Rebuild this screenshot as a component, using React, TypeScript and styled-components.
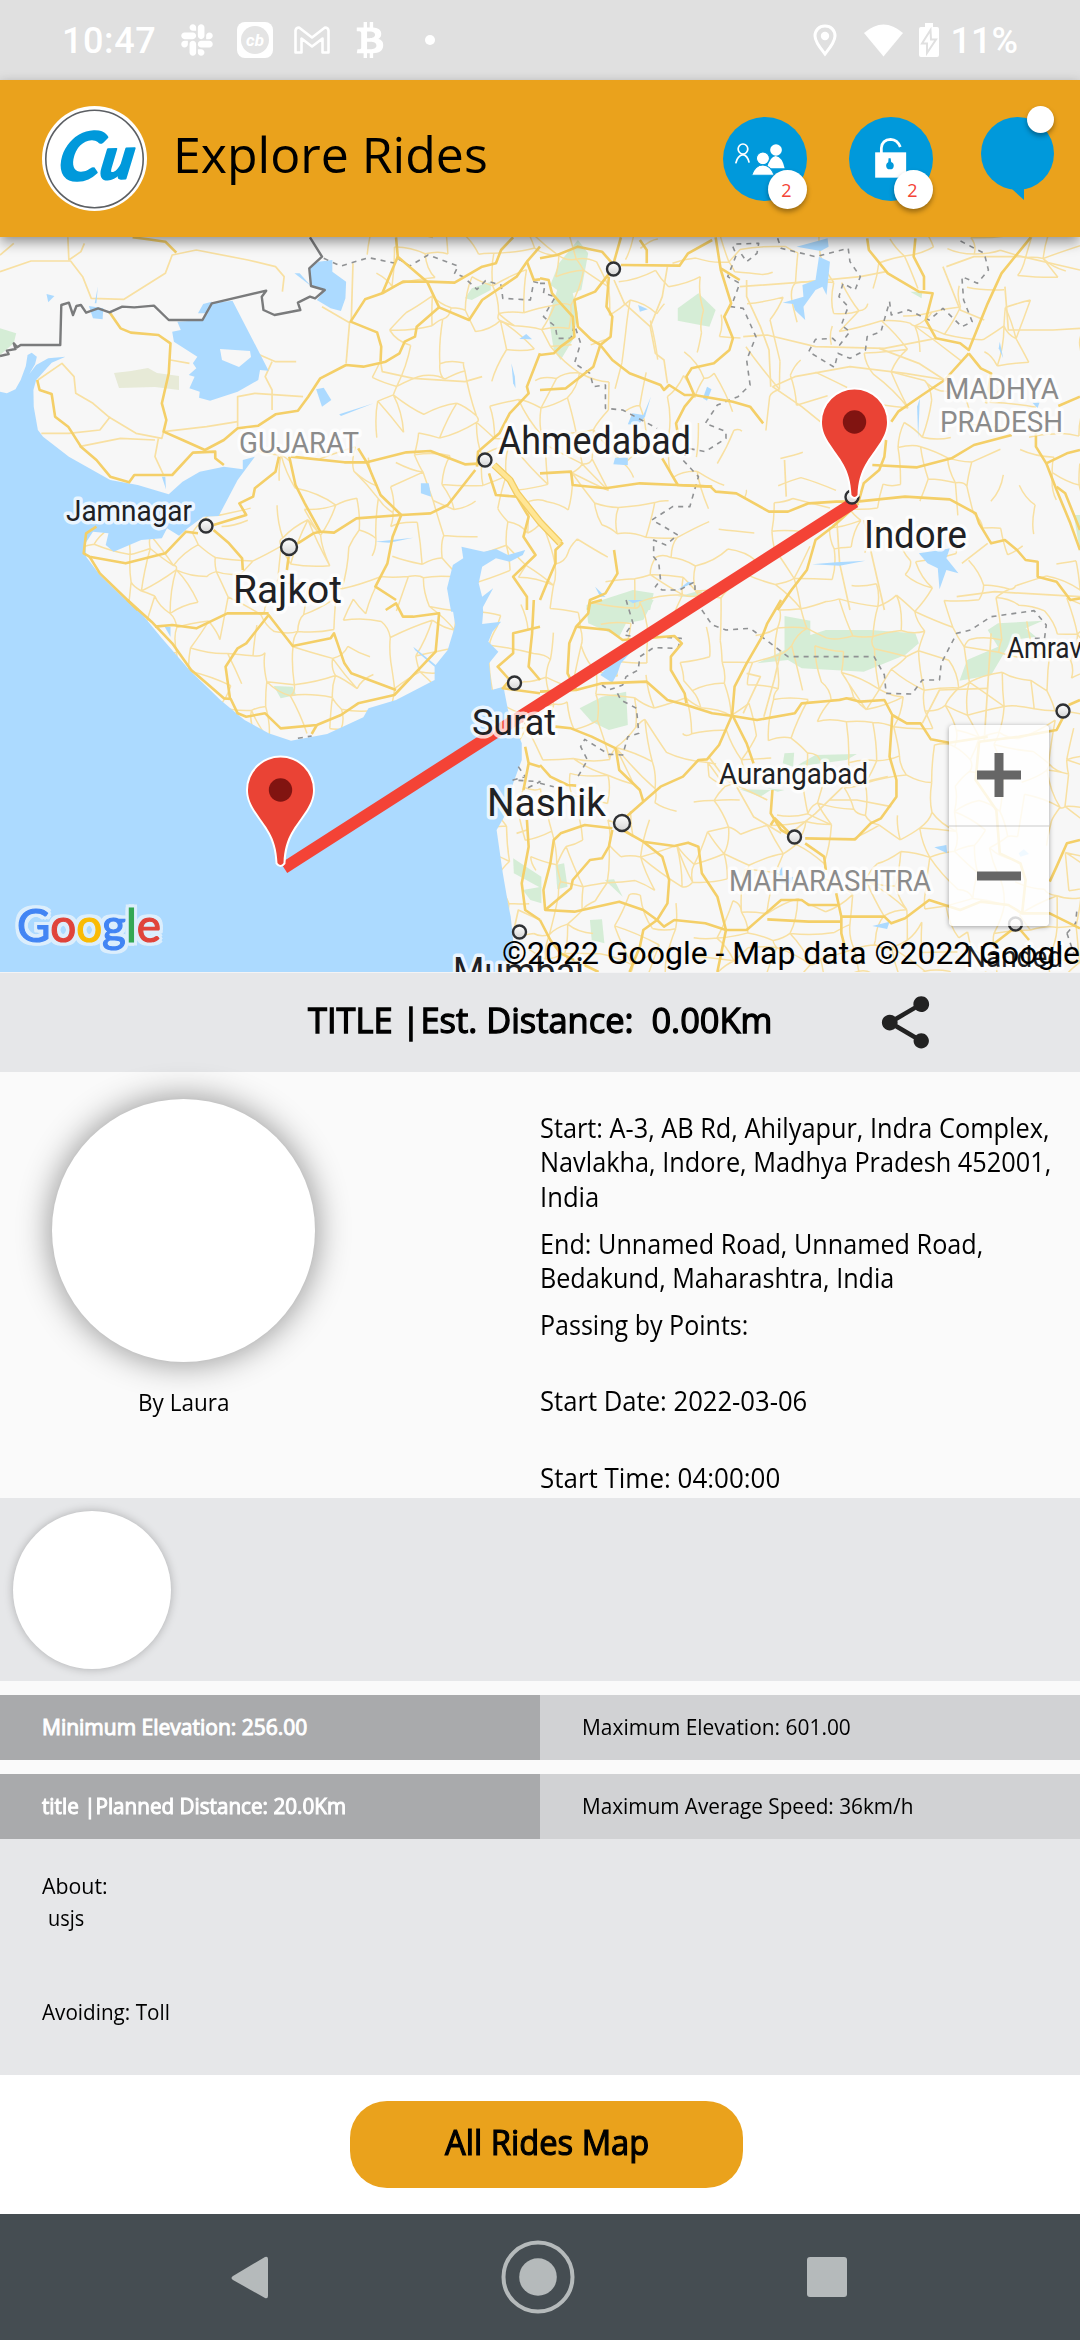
import React, { useLayoutEffect, useRef, useState } from 'react';
import styled, { createGlobalStyle } from 'styled-components';
import { FaSlack, FaBtc } from 'react-icons/fa';
import { MdShare } from 'react-icons/md';

const ORANGE = '#eaa21c';
const BLUE = '#0099db';
const PANEL = '#e6e7e9';

const Global = createGlobalStyle`
  * { box-sizing: border-box; }
  body { margin: 0; background: #fafafa; font-family: 'Open Sans', 'Noto Sans', sans-serif; color: #000; }
`;

const Screen = styled.main`
  width: 1080px;
  height: 2340px;
  display: flex;
  flex-direction: column;
  overflow: hidden;
  background: #fafafa;
`;

/* ---------- condensed text ---------- */

const FitBox = styled.span<{ $w: number; $size: number; $lh: number; $bold?: number }>`
  display: block;
  flex: none;
  width: ${p => p.$w}px;
  height: ${p => p.$lh}px;
  line-height: ${p => p.$lh}px;
  font-size: ${p => p.$size}px;
  white-space: pre;
  -webkit-text-stroke: ${p => p.$bold || 0}px currentColor;
`;
const FitInner = styled.span`
  display: inline-block;
  transform-origin: 0 50%;
`;

type FitProps = { w: number; size: number; lh: number; bold?: number; children: string };

function Fit({ w, size, lh, bold, children }: FitProps) {
  const ref = useRef<HTMLSpanElement>(null);
  const [scale, setScale] = useState(1);
  useLayoutEffect(() => {
    if (ref.current) setScale(w / ref.current.offsetWidth);
  }, [w, children]);
  return (
    <FitBox $w={w} $size={size} $lh={lh} $bold={bold}>
      <FitInner ref={ref} style={{ transform: `scaleX(${scale})` }}>{children}</FitInner>
    </FitBox>
  );
}

/* ---------- status bar ---------- */

const StatusBar = styled.div`
  flex: none;
  height: 80px;
  padding: 0 62px 0 62px;
  display: flex;
  align-items: center;
  justify-content: space-between;
  background: #e0e0e0;
  color: #fff;
  font: 500 36px Roboto, sans-serif;
`;
const StatusGroup = styled.div<{ $gap: number }>`
  display: flex;
  align-items: center;
  gap: ${p => p.$gap}px;
  svg { display: block; flex: none; }
`;
const Clock = styled.span`
  width: 95px;
  letter-spacing: 0.6px;
  line-height: 42px;
  padding-top: 2px;
`;
const Dot = styled.span`
  width: 10px;
  height: 10px;
  margin-left: 13px;
  border-radius: 50%;
  background: #fff;
`;
const Percent = styled.span`
  margin-left: -15px;
  line-height: 42px;
  padding-top: 2px;
`;

function Status() {
  return (
    <StatusBar>
      <StatusGroup $gap={24}>
        <Clock>10:47</Clock>
        <FaSlack size={36} style={{ marginLeft: -2 }} />
        <svg width="36" height="36" viewBox="0 0 36 36" style={{ marginLeft: -2 }}>
          <rect width="36" height="36" rx="8" fill="#fff" />
          <circle cx="18" cy="18" r="14" fill="#e4e4e4" />
          <text x="18" y="24" textAnchor="middle" fontFamily="Roboto, sans-serif" fontWeight="700" fontStyle="italic" fontSize="17" fill="#fff">cb</text>
        </svg>
        <svg width="36" height="28" viewBox="0 0 36 28" fill="none" stroke="#fff" strokeWidth="2.6" strokeLinejoin="round" style={{ marginLeft: -3 }}>
          <path d="M1.5 4.5 Q2 1.5 5 1.5 L18 11.5 L31 1.5 Q34 1.5 34.5 4.5 V26.5 H28.5 V12.5 L18 20.5 L7.5 12.5 V26.5 H1.5 Z" />
        </svg>
        <FaBtc size={36} style={{ marginLeft: -2 }} />
        <Dot />
      </StatusGroup>
      <StatusGroup $gap={27}>
        <svg width="24" height="33" viewBox="0 0 24 33">
          <path d="M12 2 C6 2 2 6.300 2 12 C2 18 8 25 12 30 C16 25 22 18 22 12 C22 6.300 18 2 12 2Z" fill="none" stroke="#fff" strokeWidth="3" />
          <circle cx="12" cy="12" r="4.200" fill="#fff" />
        </svg>
        <svg width="39" height="33" viewBox="0 0 39 33">
          <path d="M0 9 Q19.500 -8 39 9 L19.500 32.500Z" fill="#fff" />
        </svg>
        <svg width="20" height="34" viewBox="0 0 20 34" style={{ marginLeft: -11 }}>
          <path d="M6 0 H14 V4 H18 Q20 4 20 6 V32 Q20 34 18 34 H2 Q0 34 0 32 V6 Q0 4 2 4 H6Z" fill="#fff" />
          <path d="M11.500 7 L3 20.500 H8 V30 L17 16.500 H12Z" fill="#fff" stroke="#e0e0e0" strokeWidth="2" />
        </svg>
        <Percent>11%</Percent>
      </StatusGroup>
    </StatusBar>
  );
}

/* ---------- app header ---------- */

const Header = styled.header`
  flex: none;
  position: relative;
  z-index: 2;
  height: 157px;
  padding: 26px 26px 26px 42px;
  display: flex;
  align-items: flex-start;
  background: ${ORANGE};
  box-shadow: 0 5px 12px rgba(0, 0, 0, 0.42);
`;
const Title = styled.h1`
  margin: 6px 0 0 26px;
  font-weight: 400;
`;
const Actions = styled.div`
  margin-left: auto;
  margin-top: 11px;
  display: flex;
  align-items: flex-start;
`;
const Action = styled.div<{ $ml: number }>`
  position: relative;
  margin-left: ${p => p.$ml}px;
  svg { display: block; }
`;
const Badge = styled.span<{ $size: number; $top: number }>`
  position: absolute;
  right: 0;
  top: ${p => p.$top}px;
  width: ${p => p.$size}px;
  height: ${p => p.$size}px;
  border-radius: 50%;
  display: flex;
  align-items: center;
  justify-content: center;
  padding-right: 2px;
  background: #fff;
  color: #f44336;
  font-size: 18px;
  box-shadow: 0 3px 5px rgba(0, 0, 0, 0.35);
`;

function AppHeader() {
  return (
    <Header>
      <svg width="105" height="105" viewBox="0 0 105 105">
        <circle cx="52.500" cy="52.500" r="52.500" fill="#fff" />
        <circle cx="52.500" cy="53" r="48.700" fill="none" stroke="#5c5f63" strokeWidth="1.600" />
        <g transform="translate(14 75) rotate(-2) skewX(-12)" fill={BLUE} stroke={BLUE} strokeWidth="2" strokeLinejoin="round" fontFamily="Lato, sans-serif" fontWeight="900" fontStyle="italic">
          <text textLength="75" lengthAdjust="spacingAndGlyphs" fontSize="62">
            <tspan fontSize="66">C</tspan><tspan fontSize="58">u</tspan>
          </text>
        </g>
      </svg>
      <Title><Fit w={315} size={50} lh={84}>Explore Rides</Fit></Title>
      <Actions>
        <Action $ml={0}>
          <svg width="84" height="84" viewBox="531 350 244 252" preserveAspectRatio="none">
            <ellipse cx="653" cy="476" rx="122" ry="126" fill={BLUE} />
            <g fill="none" stroke="#fff" strokeWidth="5">
              <ellipse cx="589" cy="446" rx="14" ry="15" />
              <path d="M568 489 Q573 466 589 463 Q602 465 607 487" />
            </g>
            <g fill="#fff">
              <circle cx="685" cy="449" r="17" />
              <path d="M658 504 Q668 468 684 467 Q704 471 710 504Z" />
              <g stroke={BLUE} strokeWidth="3">
                <circle cx="647" cy="474" r="19" />
                <path d="M614 525 Q624 494 647 494 Q669 494 680 525Z" />
              </g>
            </g>
          </svg>
          <Badge $size={39} $top={53}>2</Badge>
        </Action>
        <Action $ml={42}>
          <svg width="84" height="84" viewBox="897 350 244 252" preserveAspectRatio="none">
            <ellipse cx="1019" cy="476" rx="122" ry="126" fill={BLUE} />
            <rect x="973" y="456" width="90" height="76" fill="#fff" />
            <path d="M991 458 V443 Q993 418 1018 417 Q1038 418 1046 440" fill="none" stroke="#fff" strokeWidth="8" />
            <circle cx="1016" cy="496" r="11" fill={BLUE} />
            <path d="M1012 474 H1018 L1021 496 H1010Z" fill={BLUE} />
          </svg>
          <Badge $size={39} $top={53}>2</Badge>
        </Action>
        <Action $ml={48}>
          <svg width="73" height="84" viewBox="0 0 73 84">
            <circle cx="36.500" cy="36.500" r="36.500" fill={BLUE} />
            <path d="M31 72 L43 83 V70Z" fill={BLUE} />
          </svg>
          <Badge $size={27} $top={-11} />
        </Action>
      </Actions>
    </Header>
  );
}

/* ---------- map ---------- */

const MapArea = styled.section`
  flex: none;
  position: relative;
  height: 735px;
  overflow: hidden;
  background: #f7f7f7;
  > svg { display: block; }
`;
const ZoomBox = styled.div`
  position: absolute;
  left: 949px;
  top: 488px;
  width: 100px;
  height: 201px;
  display: flex;
  flex-direction: column;
  background: rgba(255, 255, 255, 0.82);
  border-radius: 4px;
  box-shadow: 0 1px 5px rgba(0, 0, 0, 0.35);
`;
const ZoomButton = styled.button`
  flex: 1;
  display: flex;
  align-items: center;
  justify-content: center;
  padding: 0;
  border: 0;
  background: none;
  & + & { border-top: 2px solid rgba(0, 0, 0, 0.1); }
`;

type Sheet = {
  at: string;
  greens: string[];
  water: string[];
  major: string[];
  minor: string[];
  dashed: string[];
};

/* Each sheet is a quarter of the map in its own survey units. */
const sheets: Sheet[] = [
  {
    at: 'translate(0 230) scale(.34439 .33333)',
    greens: ['0 295 47 310 40 340 0 375', '1350 205 1370 175 1425 155 1425 180 1370 210'],
    water: [
      '0 485 20 490 45 478 60 450 75 408 80 375 92 368 107 380 102 402 85 432 105 405 140 385 190 380 150 398 105 450 97 480 98 530 110 600 125 620 200 680 320 750 400 765 490 793 530 755 580 725 650 710 705 718 705 690 740 680 690 750 635 858 590 860 545 895 520 917 485 895 470 925 410 930 330 965 307 945 315 910 270 905 248 940 250 980 290 1035 400 1145 0 1145',
      '1340 950 1405 965 1440 957 1475 975 1525 960 1518 975 1480 995 1440 985 1400 1010 1390 1060 1400 1100 1432 1075 1395 1145 1310 1145 1298 1075 1315 1005 1345 985',
      '515 275 590 270 615 220 675 212 780 422 755 420 750 450 690 485 610 512 578 503 580 485 550 475 565 440 548 435 570 415 560 400 573 380 505 335 500 305 525 300',
      '575 250 590 222 615 215 600 250', '898 115 925 95 965 90 965 125 1005 155 1003 205 990 243 960 235 920 210 943 180 900 168', '855 130 870 130 903 168',
      '135 192 158 198 140 217', '258 228 300 235 298 268 270 265', '275 220 284 170 280 220', '918 478 940 473 962 510 935 530', '985 553 1085 520 990 558',
      '1222 760 1245 760 1252 800 1222 790', '1090 935 1200 923 1130 938', '1508 327 1528 312 1545 328', '1485 400 1495 440 1497 475 1490 460', '470 740 480 740 482 778',
    ],
    major: [
      '385 22 430 28 480 35 512 68', '318 247 350 295 380 308 460 315 495 340 490 430 470 520 483 570 475 605 530 630 595 660 650 630 690 595 750 587 800 553 865 542 895 500 930 445 1005 405 1055 410 1120 395 1160 370 1175 335 1205 320 1210 290 1275 232 1240 155 1155 80 1150 22',
      '1240 155 1170 155 1110 190 1060 208 1018 275 1095 307 1107 350 1105 395', '1240 155 1320 158 1400 110 1440 100 1455 60 1490 22', '1275 232 1362 270 1400 210 1500 140 1530 95 1568 50', '1155 80 1110 190',
      '108 450 115 480 150 492 160 560 198 590 235 650 280 690 320 740 375 757 390 735 500 735 560 668 625 665 625 685 650 705', '845 680 1000 697 1065 697 1180 667 1250 663 1350 703 1400 700', '1040 655 1065 697 1105 795 1165 855 1140 920 1125 1000 1090 1070 1150 1110',
      '1165 855 1250 850 1300 825 1380 720', '840 680 858 765 885 820 930 905 970 908 1035 865 1165 855', '810 680 800 725 740 775 735 800 695 820 715 855 620 885', '575 910 540 905 480 970 365 1000 260 980 243 970 250 910 280 890',
      '620 900 665 940 703 985 705 1020', '260 980 290 1030 400 1140', '865 940 910 910 930 905', '838 980 833 1020', '1385 710 1388 665 1450 610 1480 550 1535 490 1530 470 1568 370', '1420 730 1440 795 1500 800 1535 860 1520 920 1555 975 1490 1040 1530 1100 1530 1140', '1530 95 1550 150 1568 148',
    ],
    minor: [
      '0 125 90 93 205 93 240 140 265 205 360 208 480 130 500 75 570 60 720 90 800 110 825 140 820 185', '197 22 200 90 235 65 245 40', '0 75 40 40', '110 450 180 400 215 440 220 490 270 520 315 560 395 610 470 625 475 605', '120 610 200 610 290 600 320 560', '230 650 350 625 450 630', '640 375 670 395 740 368 800 395 860 395', '495 390 550 400', '790 395 770 440 790 480 790 540', '690 590 690 500 740 490 880 500', '475 605 600 590 690 575', '460 625 450 680 475 735', '935 230 1015 278 1005 400', '1025 100 1020 270', '1105 395 1110 425 1200 445 1350 455 1400 440',
    ],
    dashed: ['940 85 990 108 1070 83 1150 100 1160 88 1190 108 1243 75 1330 108 1320 130 1345 140 1385 178 1410 152 1455 165 1460 205 1540 210 1550 155 1568 160'],
  },
  {
    at: 'translate(540 230) scale(.34439 .33333)',
    greens: ['55 100 110 30 140 70 120 180 95 190 110 250 95 330 60 390 40 360 25 260 50 180 30 165', '400 235 460 190 510 240 492 290 400 272', '1075 185 1110 185 1108 205', '1550 855 1568 855 1568 965', '135 1140 135 1125 270 1080 330 1090 320 1140', '400 1100 470 1080 470 1100'],
    water: ['810 80 842 95 832 195 820 170 800 180 765 230 770 270 740 240 735 222 705 218 765 200 762 165 800 150', '745 50 835 25 838 50 815 63', '285 225 313 238 290 245', '473 505 485 470 498 478 485 512', '255 583 268 550 300 555 322 500 305 560 285 585', '213 703 218 683 255 683 255 706', '1100 970 1165 960 1190 955 1180 985 1215 1030 1180 1020 1160 1078 1155 1015 1125 1000', '1095 530 1103 505 1098 625', '1335 335 1345 385 1332 355', '790 1003 860 997 945 992 870 1007', '160 1070 190 1100 175 1100', '400 1080 430 1055 445 1058', '1430 518 1450 518 1445 535'],
    major: [
      '0 85 50 75 110 50 180 65 210 100', '215 95 235 22', '235 105 405 107 430 70 500 30', '290 30 310 60 310 100', '510 22 525 120 555 220 535 260 560 325 550 360 505 400 440 415 425 440 448 495', '200 140 193 230 210 260 205 320 175 345 150 330 110 290 100 210 160 185 205 125',
      '0 145 25 150 35 190 60 220 95 260 100 320 60 350 40 370 0 375', '175 345 210 390 260 430 350 465 360 480 375 465 420 495 448 495 560 515 610 530 648 580', '175 345 155 410 75 475 0 480', '448 495 420 530 395 580 400 610', '355 685 400 765 495 770 510 785 570 790 665 845 720 845 780 820 860 815 920 815 1060 800 1190 808 1265 850 1275 880 1310 940 1350 930 1385 960 1410 990 1445 995 1445 1040 1500 1055 1540 1110 1568 1105',
      '0 730 90 725 95 765 190 775 290 760 400 765 500 770', '0 1110 20 1060 45 1000 45 960 65 940 50 925', '215 960 225 1030 190 1090 145 1110 140 1140', '950 25 955 60 1010 130 1100 185 1140 190 1120 270 1150 325 1220 340 1245 360 1300 220 1340 130 1425 22', '1090 25 1085 80 1115 140 1115 180',
      '1245 370 1175 450 1110 495 1040 545 1020 575', '1245 370 1280 415 1310 430 1295 520', '1005 630 1000 680 985 720 940 760 925 815', '965 705 1095 712 1195 685 1260 645 1370 615', '1440 610 1440 650 1470 700 1500 780 1540 880 1568 960', '1500 770 1525 790 1568 900', '1470 700 1530 670 1568 660', '1505 528 1568 500', '925 820 850 890 800 930 775 1020 730 1080 690 1140', '525 115 580 150',
    ],
    minor: ['580 170 780 155 930 140 1005 125', '215 150 245 220 320 290 335 370 360 390 370 460', '370 110 355 200 320 290', '670 470 665 360 640 290 600 200 600 150', '675 470 740 440 900 410 1060 430 1180 450', '590 320 660 315 800 350 1000 355 1150 325', '985 355 1100 400 1175 450', '675 470 760 530 820 580', '1180 110 1260 80 1400 80 1568 120', '1350 170 1360 300 1490 300 1568 295', '1170 110 1220 240 1290 270', '710 690 715 800', '860 840 870 1000 900 1140', '940 870 1000 1140', '1210 1100 1320 1085 1568 1100', '1225 1000 1300 940'],
    dashed: ['560 50 570 75 545 140 580 160 555 230 590 235 627 320 600 390 610 465 575 500 515 525 480 580 540 605 540 625 480 665 430 655 415 690 460 740 435 830 385 830 325 870 360 890 400 915 365 945 330 930 330 980 345 1000 350 1050 335 1070 355 1080 405 1080 450 1055 450 1080', '570 42 635 40 630 70 600 95 580 65', '690 25 700 55 800 80 895 55 900 95 930 140 915 180 880 160 868 200 895 230 875 285 900 305 870 345 850 325 800 328 780 365 855 412 865 370 900 385 945 360 950 320 990 305 1015 215 1020 255 1070 240 1130 270 1170 235 1225 290 1255 275 1230 210 1225 140 1270 160 1302 120 1290 70 1215 30', '0 160 15 160 10 190 45 200 10 260 45 290 50 325 90 325 100 285 118 340 100 400 145 430 155 470 190 465 190 535 240 540 340 595'],
  },
  {
    at: 'translate(0 600) scale(.34439 .33333)',
    greens: ['795 258 850 260 860 285 815 295', '1490 775 1572 830 1572 865 1492 820', '1518 870 1572 860 1572 910 1540 900'],
    water: ['0 0 370 0 410 40 470 115 550 210 640 300 710 360 780 400 845 422 950 402 1055 352 1070 325 1150 300 1262 240 1262 200 1205 150 1200 140 1265 195 1300 150 1322 75 1310 0 1400 0 1403 35 1400 72 1455 65 1430 95 1418 125 1447 155 1420 190 1428 270 1462 260 1475 330 1515 430 1515 480 1490 550 1470 640 1442 690 1460 820 1475 910 1483 950 1490 1020 1480 1120 0 1120', '478 80 495 80 495 110'],
    major: ['370 0 440 65 500 130 555 210 600 250 650 295 670 297 690 340 715 350 770 340 815 385 920 375 990 345 1040 310 1145 285 1265 155 1275 40 1200 50 1170 50 1150 10 1120 30', '668 297 655 200 690 145 715 130 780 45 850 138 960 115 970 100 1000 190 1020 220 1150 270', '780 40 660 40 570 85 500 75 450 80', '920 375 905 402', '1568 80 1490 100 1490 160 1445 200 1480 240 1460 265 1568 280', '1550 0 1545 100 1535 200 1568 240', '1525 440 1535 490 1520 570', '1530 660 1535 740 1515 850 1525 930 1568 960', '1535 490 1568 500'],
    minor: ['1490 1000 1505 930 1568 960', '1500 700 1530 690'],
    dashed: ['865 415 905 408', '1505 500 1525 530 1490 540 1568 545 1520 570'],
  },
  {
    at: 'translate(540 600) scale(.34439 .33333)',
    greens: ['135 25 240 0 330 0 300 60 250 70 230 110 140 70', '710 48 785 62 785 105 830 90 960 90 1090 100 1100 130 1060 165 940 215 760 205 720 180 630 190 710 150', '1300 90 1330 70 1460 62 1410 85 1440 110 1370 120 1310 225 1218 242 1240 180 1330 140', '115 325 180 290 250 275 255 375 200 390 150 365', '710 460 738 458 735 500 705 490', '740 500 800 465 920 462 890 480 780 495', '580 568 670 570 640 590', '45 795 70 790 80 860 50 868', '188 840 215 838 240 890', '145 960 180 958 187 1030 150 1020', '660 565 710 570 690 575'],
    water: ['175 225 210 185 265 155 235 190 225 220 210 248', '1145 742 1180 735 1182 760', '965 978 1015 965 1008 987', '695 815 703 800 705 840 735 830 735 850 700 850', '1390 760 1405 748 1420 762 1395 770', '255 0 300 0 270 10'],
    major: [
      '700 0 660 70 645 110 600 190 565 260 558 345 520 435 485 478 460 480 415 530 350 560 300 605 240 660', '105 80 85 130 80 220 105 270', '0 275 105 270 180 250 310 245 370 300 425 315 500 340 560 348 630 360 740 340 760 310 870 300 890 295 930 305 1000 300 1023 345 1065 370 1105 370 1135 418 1188 428 1300 410', '180 0 145 10 140 40 105 80 200 90 240 120 390 108 412 130 380 170 380 210 420 280 425 310',
      '560 348 600 430 620 490', '675 570 670 640 700 690 735 710', '670 675 682 655 735 710', '1023 345 1015 470 1035 540 1035 590 990 655 960 670 915 718 770 715', '45 380 90 385 150 410 220 445 230 510 290 570 300 605', '0 495 30 530 80 555 105 557', '240 690 300 725 390 738 430 728 460 740 470 820 515 890 540 990 515 1116', '300 725 355 770 375 840 370 910 340 960 300 990 290 1040 260 1116',
      '210 690 200 740 180 775 145 780 95 840 90 865 15 930', '210 685 130 675 60 700 40 720 30 790 10 870 15 930 100 935 230 905 300 930 340 960 360 980 390 960 480 970 540 990 600 990 700 900 760 900 780 915 865 915', '660 958 780 965 875 965', '770 730 825 770 830 810', '860 880 875 950 875 1000 885 1040', '875 950 1000 950 1020 970 1060 955 1130 900 1220 930 1280 905 1360 915 1400 940 1480 940 1568 985', '1520 350 1500 390 1390 410 1275 425', '1535 315 1568 300', '1480 845 1500 800 1530 730 1568 720', '1370 990 1320 1030', '1395 990 1420 1020', '0 960 30 1020 60 1060 170 1116', '1275 425 1265 540 1325 630 1335 760 1395 790 1410 840 1400 940',
    ],
    minor: ['650 350 680 240 700 150', '590 340 640 230 600 220', '490 470 540 540 660 600', '560 540 620 650 700 700', '740 690 800 640 880 560 1010 530', '1110 370 1160 270 1300 265', '1290 420 1310 100', '840 600 920 600 1020 620'],
    dashed: ['470 30 500 75 540 90 610 85 650 115 720 170 970 170 1000 225 1005 280 1080 282 1110 240 1160 240 1165 190 1210 100 1250 90 1310 50 1435 32 1470 75 1465 115 1430 115', '250 0 270 70 245 105 300 115', '340 110 410 115 400 145 330 143 290 170 285 210 250 230 240 255 200 270 180 255', '225 280 235 300 280 325 287 400 255 410 240 465 200 463 130 418 118 440 138 480 110 530', '1530 1000 1555 970 1560 920', '1530 1000 1550 1060', '0 550 40 560'],
  },
];

/* Fine web of country lanes, laid on a jittered lattice. */
const lanes = (() => {
  let seed = 11;
  const rnd = () => {
    seed = (seed * 1103515245 + 12345) % 2147483648;
    return seed / 2147483648;
  };
  const step = 25;
  const cols = 45;
  const rows = 32;
  const pts: number[][][] = [];
  for (let r = 0; r < rows; r++) {
    pts.push([]);
    for (let c = 0; c < cols; c++) pts[r].push([c * step + rnd() * 22 - 11, 230 + r * step + rnd() * 22 - 11]);
  }
  const sparse = (x: number, y: number) =>
    (x < 370 && y < 440) || (x < 250 && y < 500) || (x > 600 && y < 560 && rnd() < 0.45);
  let d = '';
  const link = (a: number[], b: number[]) => {
    if (sparse(a[0], a[1])) return;
    const mx = (a[0] + b[0]) / 2 + rnd() * 8 - 4;
    const my = (a[1] + b[1]) / 2 + rnd() * 8 - 4;
    d += `M${a[0].toFixed(1)} ${a[1].toFixed(1)}Q${mx.toFixed(1)} ${my.toFixed(1)} ${b[0].toFixed(1)} ${b[1].toFixed(1)}`;
  };
  for (let r = 0; r < rows - 1; r++) {
    for (let c = 0; c < cols - 1; c++) {
      if (rnd() < 0.62) link(pts[r][c], pts[r][c + 1]);
      if (rnd() < 0.62) link(pts[r][c], pts[r + 1][c]);
      if (rnd() < 0.12) link(pts[r][c], pts[r + 1][c + 1]);
    }
  }
  return d;
})();

const line = (p: string) => `M${p}`;
const area = (p: string) => `M${p}Z`;

const MapLine = styled.path<{ $c: string; $w: number; $dash?: string }>`
  fill: none;
  stroke: ${p => p.$c};
  stroke-width: ${p => p.$w}px;
  stroke-dasharray: ${p => p.$dash || 'none'};
  stroke-linejoin: round;
  vector-effect: non-scaling-stroke;
`;
const Label = styled.text<{ $size: number; $c?: string }>`
  font: 400 ${p => p.$size}px Roboto, sans-serif;
  fill: ${p => p.$c || '#202124'};
  stroke: rgba(255, 255, 255, 0.75);
  stroke-width: 7px;
  stroke-linejoin: round;
  paint-order: stroke;
`;
const Wordmark = styled.text`
  font: 400 47px Lato, sans-serif;
  stroke-width: 1.2px;
  filter: drop-shadow(3px 0 0 #dceefc) drop-shadow(-3px 0 0 #dceefc) drop-shadow(0 3px 0 #dceefc) drop-shadow(0 -3px 0 #dceefc);
`;

const GRAY = '#8b8b8b';
const labels: [string, number, number, number, number, string?][] = [
  ['GUJARAT', 239, 452.5, 120, 29.5, GRAY],
  ['MADHYA', 945, 399, 114, 29.5, GRAY],
  ['PRADESH', 940, 432, 123, 29.5, GRAY],
  ['MAHARASHTRA', 729, 890.5, 202, 29.5, GRAY],
  ['Ahmedabad', 498, 454, 193, 38],
  ['Jamnagar', 66, 521, 126, 29.5],
  ['Rajkot', 233, 603, 109, 38],
  ['Indore', 864, 548, 103, 38],
  ['Surat', 472, 735, 84, 37],
  ['Nashik', 487, 816, 119, 38],
  ['Amravati', 1007, 658, 104, 29.5],
  ['Aurangabad', 719, 784, 149, 29.5],
  ['Mumbai', 453, 984.5, 131, 38],
  ['Nanded', 966, 967, 97, 29.5],
];
const towns: [number, number, number][] = [
  [485, 460, 6.5], [206, 526, 6.5], [289, 547, 8], [613.5, 269, 6.5], [514.500, 683, 6.5],
  [622, 823, 8], [794.5, 837, 6.5], [1063, 711, 6.5], [519.5, 932, 6.5], [1015.5, 924, 6.5],
];

const Town = styled.circle`
  fill: url(#town);
  stroke: #2f3134;
  stroke-width: 2.4px;
`;

function Pin({ x, y }: { x: number; y: number }) {
  return (
    <g transform={`translate(${x} ${y})`}>
      <path
        d="M-3 73 C-4 46 -15 37 -26 20 C-31 12 -32.500 6 -32.500 0 A32.500 32.500 0 0 1 32.500 0 C32.500 6 31 12 26 20 C15 37 4 46 3 73 Q0 77 -3 73Z"
        fill="#ea4335" stroke="#fff" strokeWidth="4" paintOrder="stroke"
      />
      <circle r="11.700" fill="#811411" />
    </g>
  );
}

function RideMap() {
  return (
    <MapArea>
      <svg width="1080" height="735" viewBox="0 237 1080 735">
        <defs>
          <linearGradient id="town" x2="0" y2="1">
            <stop offset="0" stopColor="#fff" />
            <stop offset="1" stopColor="#d5d5d5" />
          </linearGradient>
        </defs>
        <rect y="237" width="1080" height="735" fill="#f7f7f7" />
        {sheets.map(s => (
          <g key={s.at} transform={s.at}>
            {s.greens.map(p => <path key={p} d={area(p)} fill="#d5edd6" />)}
          </g>
        ))}
        <path d="M114 373 L131 371 148 368 157 373 179 376 179 390 155 387 119 388Z" fill="#e7ead7" />
        <path d={lanes} fill="none" stroke="#f8e0a2" strokeWidth="1.500" />
        {sheets.map(s => (
          <g key={s.at} transform={s.at}>
            {s.minor.map(p => <MapLine key={p} d={line(p)} $c="#f8e0a2" $w={1.7} />)}
            {s.water.map(p => <path key={p} d={area(p)} fill="#acdaff" />)}
          </g>
        ))}
        <path d="M220 349 L250 351 251 357 239 367 222 360Z" fill="#f7f7f7" />
        {sheets.map(s => (
          <g key={s.at} transform={s.at}>
            {s.dashed.map(p => <MapLine key={p} d={line(p)} $c="#909294" $w={1.6} $dash="5 5" />)}
            {s.major.map(p => <MapLine key={p} d={line(p)} $c="#f4cf68" $w={2.6} />)}
          </g>
        ))}
        <g fill="none" strokeLinejoin="round">
          <path d="M494 465 L510 480 517 493 540 522 560 543" stroke="#f2cc62" strokeWidth="7" />
          <path d="M494 465 L510 480 517 493 540 522 560 543" stroke="#ffe695" strokeWidth="4.500" />
          <path
            transform="translate(0 230) scale(.34439 .33333)"
            vectorEffect="non-scaling-stroke"
            d="M0 378 25 372 20 362 45 357 40 340 50 352 60 345 175 345 178 225 200 218 212 255 222 228 235 225 250 248 285 235 318 247 355 230 390 232 447 227 490 270 588 270 615 220 773 182 760 200 765 240 797 255 872 240 865 218 900 200 915 205 943 180 903 168 898 115 935 80 900 22"
            stroke="#7a7b7c" strokeWidth="2.400"
          />
        </g>
        {towns.map(([x, y, r]) => <Town key={`${x}-${y}`} cx={x} cy={y} r={r} />)}
        <path d="M284 868 L855 502" stroke="#f44336" strokeWidth="12" />
        <Town cx={852} cy={497} r={6.5} />
        {labels.map(([t, x, y, w, size, c]) => (
          <Label key={t} x={x} y={y} textLength={w} lengthAdjust="spacingAndGlyphs" $size={size} $c={c}>{t}</Label>
        ))}
        <Pin x={854.5} y={422} />
        <Pin x={280.5} y={790} />
        <Wordmark x="17" y="941.5" textLength="144" lengthAdjust="spacingAndGlyphs">
          <tspan fill="#4285f4" stroke="#4285f4">G</tspan>
          <tspan fill="#e0433a" stroke="#e0433a">o</tspan>
          <tspan fill="#fabb05" stroke="#fabb05">o</tspan>
          <tspan fill="#4285f4" stroke="#4285f4">g</tspan>
          <tspan fill="#34a853" stroke="#34a853">l</tspan>
          <tspan fill="#e0433a" stroke="#e0433a">e</tspan>
        </Wordmark>
        <text x="502" y="963.500" textLength="578" lengthAdjust="spacingAndGlyphs" fontFamily="Roboto, sans-serif" fontSize="32" fill="#000">©2022 Google - Map data ©2022 Google</text>
      </svg>
      <ZoomBox>
        <ZoomButton><svg width="44" height="44"><path d="M0 22 H44 M22 0 V44" stroke="#666" strokeWidth="9" /></svg></ZoomButton>
        <ZoomButton><svg width="44" height="44"><path d="M0 22 H44" stroke="#666" strokeWidth="9" /></svg></ZoomButton>
      </ZoomBox>
    </MapArea>
  );
}

/* ---------- ride details ---------- */

const TitleBar = styled.div`
  flex: none;
  height: 100px;
  padding: 20px 0 0 308px;
  display: flex;
  align-items: flex-start;
  background: ${PANEL};
  border-top: 1px solid #f4f4f5;
  color: #000;
  svg { margin-left: 102px; margin-top: -2px; color: #222; }
`;
const Details = styled.section`
  flex: none;
  height: 426px;
  display: flex;
  background: #fafafa;
`;
const Host = styled.div`
  width: 540px;
  padding: 27px 0 0 52px;
`;
const HostInner = styled.div`
  width: 263px;
  display: flex;
  flex-direction: column;
  align-items: center;
  gap: 25px;
`;
const Avatar = styled.div<{ $size: number; $blur: number; $alpha: number }>`
  flex: none;
  width: ${p => p.$size}px;
  height: ${p => p.$size}px;
  border-radius: 50%;
  background: #fff;
  box-shadow: 0 0 ${p => p.$blur}px rgba(0, 0, 0, ${p => p.$alpha});
`;
const Info = styled.div`
  padding-top: 39px;
`;
const Para = styled.div<{ $mb: number }>`
  margin-bottom: ${p => p.$mb}px;
`;
const Riders = styled.div`
  flex: none;
  height: 183px;
  padding: 13px;
  background: ${PANEL};
`;
const StatRow = styled.div`
  flex: none;
  height: 65px;
  margin-top: 14px;
  display: grid;
  grid-template-columns: 1fr 1fr;
`;
const Stat = styled.div<{ $dark?: boolean }>`
  display: flex;
  align-items: center;
  padding-left: 42px;
  padding-bottom: 2px;
  background: ${p => (p.$dark ? '#a9aaac' : '#d1d2d4')};
  color: ${p => (p.$dark ? '#fff' : '#000')};
`;
const Notes = styled.div`
  flex: none;
  height: 236px;
  padding: 31px 42px 0;
  background: ${PANEL};
`;
const NoteGap = styled.div`
  height: 62px;
`;
const Indent = styled.div`
  padding-left: 6px;
`;
const Footer = styled.div`
  flex: none;
  height: 139px;
  padding: 26px 0 0 350px;
  background: #fff;
`;
const MapButton = styled.button`
  width: 393px;
  height: 87px;
  display: flex;
  justify-content: center;
  align-items: center;
  padding: 0 0 6px;
  border: 0;
  border-radius: 37px;
  background: ${ORANGE};
  color: #000;
  font-family: inherit;
`;
const NavBar = styled.nav`
  flex: 1;
  display: grid;
  grid-template-columns: 37px 1fr 40px;
  justify-items: center;
  align-items: center;
  padding: 0 233px 0 231px;
  background: #454d52;
  svg { display: block; }
`;

const info: { mb: number; lines: [string, number][] }[] = [
  { mb: 12.5, lines: [['Start: A-3, AB Rd, Ahilyapur, Indra Complex,', 509], ['Navlakha, Indore, Madhya Pradesh 452001,', 511], ['India', 59]] },
  { mb: 12.5, lines: [['End: Unnamed Road, Unnamed Road,', 443], ['Bedakund, Maharashtra, India', 354]] },
  { mb: 41.5, lines: [['Passing by Points:', 208]] },
  { mb: 42.5, lines: [['Start Date: 2022-03-06', 267]] },
  { mb: 0, lines: [['Start Time: 04:00:00', 240]] },
];

export default function App() {
  return (
    <Screen>
      <Global />
      <Status />
      <AppHeader />
      <RideMap />
      <TitleBar>
        <Fit w={464} size={35} lh={54} bold={1.3}>{'TITLE |Est. Distance:  0.00Km'}</Fit>
        <MdShare size={63} />
      </TitleBar>
      <Details>
        <Host>
          <HostInner>
            <Avatar $size={263} $blur={34} $alpha={0.45} />
            <Fit w={91} size={23} lh={30}>By Laura</Fit>
          </HostInner>
        </Host>
        <Info>
          {info.map(p => (
            <Para key={p.lines[0][0]} $mb={p.mb}>
              {p.lines.map(([t, w]) => <Fit key={t} w={w} size={26.5} lh={34.4}>{t}</Fit>)}
            </Para>
          ))}
        </Info>
      </Details>
      <Riders>
        <Avatar $size={158} $blur={10} $alpha={0.25} />
      </Riders>
      <StatRow>
        <Stat $dark><Fit w={265} size={21} lh={32} bold={1}>Minimum Elevation: 256.00</Fit></Stat>
        <Stat><Fit w={269} size={21} lh={32}>Maximum Elevation: 601.00</Fit></Stat>
      </StatRow>
      <StatRow>
        <Stat $dark><Fit w={304} size={21} lh={32} bold={1}>title |Planned Distance: 20.0Km</Fit></Stat>
        <Stat><Fit w={331} size={21} lh={32}>Maximum Average Speed: 36km/h</Fit></Stat>
      </StatRow>
      <Notes>
        <Fit w={66} size={21} lh={32}>About:</Fit>
        <Indent><Fit w={36} size={21} lh={32}>usjs</Fit></Indent>
        <NoteGap />
        <Fit w={128} size={21} lh={32}>Avoiding: Toll</Fit>
      </Notes>
      <Footer>
        <MapButton><Fit w={204} size={34} lh={50} bold={1.2}>All Rides Map</Fit></MapButton>
      </Footer>
      <NavBar>
        <svg width="37" height="43" viewBox="0 0 37 43"><path d="M2 20 L34 1 Q37 0 37 3 V40 Q37 43 34 42 L2 24 Q-1 22 2 20Z" fill="#b5babb" /></svg>
        <svg width="74" height="74" viewBox="0 0 74 74">
          <circle cx="37" cy="37" r="34.500" fill="none" stroke="#b5babb" strokeWidth="4" />
          <circle cx="37" cy="37" r="18.800" fill="#b5babb" />
        </svg>
        <svg width="40" height="40" viewBox="0 0 40 40"><rect width="40" height="40" rx="3" fill="#b5babb" /></svg>
      </NavBar>
    </Screen>
  );
}
